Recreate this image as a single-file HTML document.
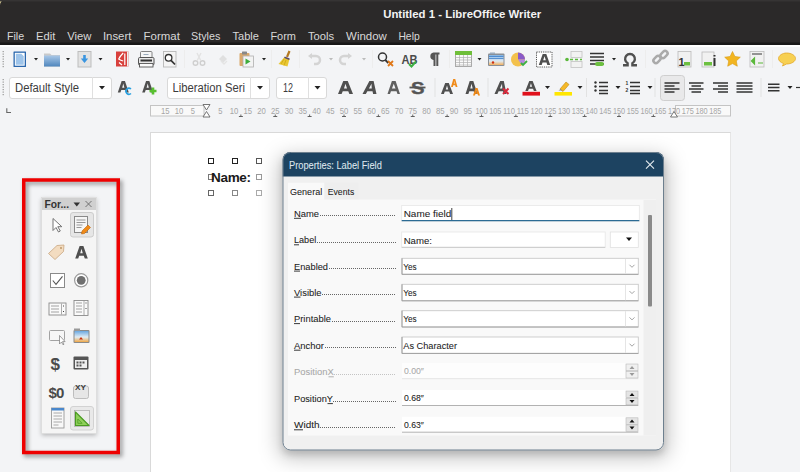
<!DOCTYPE html>
<html><head><meta charset="utf-8">
<style>
*{margin:0;padding:0;box-sizing:border-box}
html,body{width:800px;height:472px;overflow:hidden;background:#f3f4f6;font-family:"Liberation Sans",sans-serif;position:relative}
.a{position:absolute}
#title{left:0;top:0;width:800px;height:28px;background:#2b2929;color:#fff;font-weight:bold;font-size:12.5px}
#menu{left:0;top:28px;width:800px;height:17px;background:#2b2929;color:#dcdcdc;font-size:12px}
#menu span{position:absolute;top:1px}
#tb{left:0;top:45px;width:800px;height:56px;background:#f3f4f6}
#page{left:150px;top:132px;width:581px;height:340px;background:#fff;border-top:1px solid #d9d9d9;border-left:1px solid #d9d9d9;border-right:1px solid #e6e6e6}
.h{position:absolute;width:6px;height:6px;border:1px solid #222;background:#fff}
</style></head><body>
<div class="a" style="left:0;top:0;width:6px;height:6px;background:#e8dca0"></div><svg class="a" style="left:0;top:0" width="800" height="45" viewBox="0 0 800 45"><path d="M0 45 V5 a5 5 0 0 1 5 -5 H800 V45z" fill="#2b2929"/><rect x="0" y="0" width="800" height="1.5" fill="#363434"/><rect x="0" y="42.5" width="800" height="2.5" fill="#191818"/><text x="383.2" y="17.8" font-family="Liberation Sans" font-weight="bold" font-size="11.2" fill="#f4f4f4" textLength="158" lengthAdjust="spacingAndGlyphs">Untitled 1 - LibreOffice Writer</text><text x="6.9" y="39.8" font-family="Liberation Sans" font-size="11" fill="#d8d8d8" textLength="17.2" lengthAdjust="spacingAndGlyphs">File</text><text x="36.1" y="39.8" font-family="Liberation Sans" font-size="11" fill="#d8d8d8" textLength="19.3" lengthAdjust="spacingAndGlyphs">Edit</text><text x="67.3" y="39.8" font-family="Liberation Sans" font-size="11" fill="#d8d8d8" textLength="24.2" lengthAdjust="spacingAndGlyphs">View</text><text x="102.9" y="39.8" font-family="Liberation Sans" font-size="11" fill="#d8d8d8" textLength="28.5" lengthAdjust="spacingAndGlyphs">Insert</text><text x="143.6" y="39.8" font-family="Liberation Sans" font-size="11" fill="#d8d8d8" textLength="36.3" lengthAdjust="spacingAndGlyphs">Format</text><text x="191" y="39.8" font-family="Liberation Sans" font-size="11" fill="#d8d8d8" textLength="29.3" lengthAdjust="spacingAndGlyphs">Styles</text><text x="232.5" y="39.8" font-family="Liberation Sans" font-size="11" fill="#d8d8d8" textLength="26.5" lengthAdjust="spacingAndGlyphs">Table</text><text x="270.4" y="39.8" font-family="Liberation Sans" font-size="11" fill="#d8d8d8" textLength="25.6" lengthAdjust="spacingAndGlyphs">Form</text><text x="308" y="39.8" font-family="Liberation Sans" font-size="11" fill="#d8d8d8" textLength="26.2" lengthAdjust="spacingAndGlyphs">Tools</text><text x="346.1" y="39.8" font-family="Liberation Sans" font-size="11" fill="#d8d8d8" textLength="40.7" lengthAdjust="spacingAndGlyphs">Window</text><text x="398.4" y="39.8" font-family="Liberation Sans" font-size="11" fill="#d8d8d8" textLength="21.3" lengthAdjust="spacingAndGlyphs">Help</text></svg>
<div id="tb" class="a"></div><div class="a" style="left:0;top:45px;width:800px;height:1.5px;background:#fff"></div>
<svg class="a" style="left:0;top:45px" width="800" height="56" viewBox="0 45 800 56">
<defs>
<linearGradient id="gfold" x1="0" y1="0" x2="0" y2="1"><stop offset="0" stop-color="#a9c8e8"/><stop offset="1" stop-color="#4f86bd"/></linearGradient>
<linearGradient id="gimg" x1="0" y1="0" x2="0" y2="1"><stop offset="0" stop-color="#7fb3e6"/><stop offset=".6" stop-color="#dfeaf4"/><stop offset="1" stop-color="#f0b060"/></linearGradient>
</defs>
<!-- grips -->
<g fill="#a8a8a8"><rect x="2.5" y="51" width="1.5" height="1.2"/><rect x="2.5" y="53.5" width="1.5" height="1.2"/><rect x="2.5" y="56" width="1.5" height="1.2"/><rect x="2.5" y="58.5" width="1.5" height="1.2"/><rect x="2.5" y="61" width="1.5" height="1.2"/><rect x="2.5" y="63.5" width="1.5" height="1.2"/><rect x="2.5" y="66" width="1.5" height="1.2"/>
<rect x="2.5" y="79" width="1.5" height="1.2"/><rect x="2.5" y="81.5" width="1.5" height="1.2"/><rect x="2.5" y="84" width="1.5" height="1.2"/><rect x="2.5" y="86.5" width="1.5" height="1.2"/><rect x="2.5" y="89" width="1.5" height="1.2"/><rect x="2.5" y="91.5" width="1.5" height="1.2"/><rect x="2.5" y="94" width="1.5" height="1.2"/></g>
<!-- new doc -->
<rect x="13.5" y="51.5" width="12.5" height="15.5" fill="#2a67ad" rx="0.5"/>
<rect x="14.8" y="52.8" width="9.9" height="12.9" fill="#fff"/>
<path d="M15.8 53.8 h5.5 l2.4 2.4 v8.5 h-7.9 z" fill="#9ec4ea"/>
<!-- dropdowns -->
<g fill="#222">
<path d="M34 58h4l-2 2.5z"/><path d="M66 58h4l-2 2.5z"/><path d="M98.5 58h4l-2 2.5z"/><path d="M262 58h4l-2 2.5z"/>
<path d="M329 58h4l-2 2.5z" fill="#bbb"/><path d="M362 58h4l-2 2.5z" fill="#bbb"/>
<path d="M477.5 58h4l-2 2.5z"/><path d="M612 58h4l-2 2.5z"/>
</g>
<!-- folder -->
<path d="M44 53.5 h6 l1.5 1.5 h8.5 v11.5 h-16 z" fill="#c9c9c9"/>
<rect x="44" y="55.5" width="16" height="11" fill="url(#gfold)"/>
<!-- save -->
<rect x="78" y="51.5" width="13" height="15.5" fill="#e3e3e3" stroke="#bdbdbd" stroke-width="1"/>
<path d="M83.2 55 h2.6 v3.6 h2.4 l-3.7 4.4 l-3.7 -4.4 h2.4z" fill="#3a95e0"/>
<!-- pdf -->
<rect x="116" y="51.5" width="12.5" height="15" fill="#d8403c"/>
<rect x="127" y="51.5" width="1.5" height="15" fill="#eee"/>
<path d="M123.2 53 q-3 3 -4.5 6 q2 1.5 4.5 2 M124.8 53.5 v11.5 M119 62.5 l3 2.5" stroke="#fff" stroke-width="1.2" fill="none"/>
<!-- print -->
<rect x="140.5" y="51.5" width="11.5" height="7" fill="#f6f6f6" stroke="#777" stroke-width="0.9" rx="1"/>
<path d="M143.5 54.5 h5" stroke="#9ab" stroke-width="1"/>
<rect x="138.5" y="57.5" width="15.5" height="7.5" fill="#e8e8e8" stroke="#555" stroke-width="1" rx="1.2"/>
<rect x="140.5" y="59.5" width="11.5" height="2" fill="#333"/>
<rect x="139.5" y="63.5" width="13.5" height="3.5" fill="#fafafa" stroke="#555" stroke-width="0.9"/>
<!-- preview -->
<rect x="163.5" y="51.5" width="12.5" height="15.5" fill="#f4f4f4" stroke="#b8b8b8" stroke-width="0.9"/>
<circle cx="168.6" cy="57.8" r="3.3" fill="#fff" stroke="#333" stroke-width="1.3"/>
<path d="M171 60.3 l4 4.2" stroke="#333" stroke-width="1.8"/>
<!-- seps -->
<g fill="#ededed"><rect x="184" y="50" width="1" height="18"/><rect x="271" y="50" width="1" height="18"/><rect x="299" y="50" width="1" height="18"/><rect x="372" y="50" width="1" height="18"/><rect x="449" y="50" width="1" height="18"/><rect x="560" y="50" width="1" height="18"/><rect x="645" y="50" width="1" height="18"/><rect x="772" y="50" width="1" height="18"/></g>
<!-- cut (disabled) -->
<g stroke="#cfcfcf" stroke-width="1.4" fill="none"><circle cx="195.5" cy="63" r="2.3"/><circle cx="202.5" cy="63" r="2.3"/><path d="M197 61 l4 -8 M201 61 l-4 -8" stroke="#e2e2e2"/></g>
<!-- copy (disabled) -->
<path d="M219 59 l4 -4 l4 4 l-4 4z" fill="#e0e0e0"/><path d="M221 61 l3 3 l3 -3" stroke="#e4e4e4" stroke-width="1.3" fill="none"/>
<!-- paste -->
<rect x="239.5" y="53" width="10" height="13" fill="#d9a86a" rx="1"/>
<rect x="242" y="51.5" width="5" height="3" fill="#888" rx="0.5"/>
<rect x="243" y="56" width="10.5" height="11" fill="#f3f3f3" stroke="#b0b0b0" stroke-width="0.8"/>
<path d="M245.5 58.5 v6 l5 -3z" fill="#3cab3c"/>
<!-- clone brush -->
<path d="M289.5 51 l-2.5 6" stroke="#b57a22" stroke-width="2.2"/>
<path d="M284.5 57 l5 2 l-2 7.5 l-9 -2.5 z" fill="#e9c733"/>
<path d="M284.5 57.3 l5 2" stroke="#5a4a6a" stroke-width="1.5"/>
<path d="M281 64 l3 -5 M284 65.5 l2 -5.5" stroke="#c9a010" stroke-width="0.7"/>
<!-- undo/redo disabled -->
<path d="M310 56 h6 a4 4 0 0 1 0 8 h-2" stroke="#d4d4d4" stroke-width="2.5" fill="none"/><path d="M308 56 l4 -3 v6z" fill="#d4d4d4"/>
<path d="M350 56 h-6 a4 4 0 0 0 0 8 h2" stroke="#d4d4d4" stroke-width="2.5" fill="none"/><path d="M352 56 l-4 -3 v6z" fill="#d4d4d4"/>
<!-- find replace -->
<circle cx="382.5" cy="57" r="4" fill="none" stroke="#333" stroke-width="1.5"/>
<path d="M385.3 60 l3 3" stroke="#333" stroke-width="1.8"/>
<path d="M388 61 l5 5 M393 61 l-5 5" stroke="#e07818" stroke-width="1.8"/>
<!-- spelling -->
<text x="401.5" y="63.5" font-family="Liberation Sans" font-weight="bold" font-size="12.5" fill="#4a4a4a" textLength="16" lengthAdjust="spacingAndGlyphs">AB</text>
<path d="M409 64 l2.5 2.5 l4.5 -5" stroke="#3cb043" stroke-width="2" fill="none"/>
<!-- pilcrow -->
<path d="M433.5 52.5 h6 v2 h-1.2 v11.5 h-2 v-11.5 h-0.8 v11.5 h-2 v-6 a3.8 3.8 0 0 1 0 -7.5z" fill="#555"/>
<!-- table -->
<rect x="455.5" y="51.5" width="16" height="15" fill="#fafafa" stroke="#a0a0a0" stroke-width="0.9"/>
<rect x="455" y="51" width="17" height="4" fill="#6fbf3a"/>
<path d="M455.5 57.5h16 M455.5 60h16 M455.5 62.5h16 M455.5 65h16 M459.5 55v11.5 M463.5 55v11.5 M467.5 55v11.5" stroke="#b0b0b0" stroke-width="0.7"/>
<!-- image -->
<rect x="488" y="53.5" width="16.5" height="12.5" fill="#8a8f96" rx="1"/>
<rect x="489" y="55" width="14.5" height="10" fill="url(#gimg)"/>
<rect x="490" y="52.5" width="5" height="1.5" fill="#9ab"/>
<path d="M489 56.5 h14.5 M489 58.5 h14.5" stroke="#3d7fc8" stroke-width="0.8"/>
<circle cx="493" cy="62.5" r="1.2" fill="#d03010"/>
<!-- chart -->
<circle cx="518" cy="59.5" r="7" fill="#f3c14c"/>
<path d="M518 59.5 v-7 a7 7 0 0 1 7 7z" fill="#8a5ac8"/>
<path d="M518 59.5 h7 a7 7 0 0 1 -3 5.8z" fill="#b48ae0"/>
<path d="M521 63 l2 2 l4 -4" stroke="#3cb043" stroke-width="1.8" fill="none"/>
<!-- text box -->
<rect x="536.5" y="52" width="15.5" height="15" fill="#fff" stroke="#555" stroke-width="1" stroke-dasharray="1.2 1"/>
<path d="M538.8 65 L542.7 54 H546.3 L550.2 65 H547.3 L546.5 62.6 H542.5 L541.7 65 Z M543.2 60.3 H545.8 L544.5 56.2 Z" fill="#505050" fill-rule="evenodd"/>
<!-- page break -->
<rect x="571" y="51.5" width="11" height="6" fill="#f2f2f2" stroke="#c2c2c2" stroke-width="0.8"/>
<rect x="571" y="61.5" width="11" height="6" fill="#f2f2f2" stroke="#c2c2c2" stroke-width="0.8"/>
<circle cx="567" cy="59.5" r="1.8" fill="#5bb83b"/>
<path d="M570 59.5 h3 M575 59.5 h3 M580 59.5 h2" stroke="#5bb83b" stroke-width="1.5"/>
<!-- field -->
<path d="M590 53.5 h14 M590 57 h14 M590 60.5 h14 M590 64 h14" stroke="#333" stroke-width="1.6"/>
<rect x="595" y="62" width="9" height="4" rx="2" fill="#6cc040"/>
<!-- omega -->
<path d="M623 65.2 h4.6 v-2 a4.9 4.9 0 1 1 4.8 0 v2 h4.6" stroke="#505050" stroke-width="2.4" fill="none"/>
<!-- link -->
<g stroke="#aaa" stroke-width="2.5" fill="none"><rect x="653" y="57" width="8" height="5" rx="2.5" transform="rotate(-45 657 59.5)"/><rect x="660" y="52" width="8" height="5" rx="2.5" transform="rotate(-45 664 54.5)"/></g>
<!-- footnote -->
<rect x="678" y="51.5" width="13" height="15.5" fill="#f1f1f1" stroke="#bbb" stroke-width="0.8"/>
<text x="678.5" y="66" font-family="Liberation Sans" font-weight="bold" font-size="11" fill="#333">1</text>
<rect x="684" y="62" width="6" height="3.5" fill="#6cc040"/>
<!-- endnote -->
<rect x="702" y="52" width="12" height="15" fill="#f1f1f1" stroke="#bbb" stroke-width="0.8"/>
<rect x="704" y="62" width="8" height="3.5" fill="#6cc040"/>
<rect x="713.5" y="58" width="2" height="8" fill="#333"/><rect x="713.5" y="55" width="2" height="1.5" fill="#333"/>
<!-- star -->
<path d="M732.5 51.5 l2.4 5 l5.4 .7 l-4 3.7 l1 5.3 l-4.8 -2.6 l-4.8 2.6 l1 -5.3 l-4 -3.7 l5.4 -.7z" fill="#f2b520" stroke="#d89a10" stroke-width="0.6"/>
<!-- cross ref -->
<rect x="750" y="51.5" width="14" height="15.5" fill="#f1f1f1" stroke="#bbb" stroke-width="0.8"/>
<path d="M752 54 h10" stroke="#555" stroke-width="1.2"/>
<path d="M751.5 61 l3 -3 v6z M758 63 h5" fill="#5bb83b" stroke="#5bb83b" stroke-width="1.2"/>
<!-- comment -->
<path d="M786.5 53 c5 0 9 2.5 9 5.5 s-4 5.5 -9 5.5 l-4 2 l1 -2.5 c-3 -1 -5 -3 -5 -5 c0 -3 4 -5.5 8 -5.5z" fill="#f7d052" stroke="#e3a82a" stroke-width="0.8"/>
</svg>

<svg class="a" style="left:0;top:72px" width="800" height="30" viewBox="0 72 800 30">
<!-- style box -->
<rect x="9.5" y="77.5" width="102" height="21" fill="#fff" stroke="#d9d9d9" rx="2.5"/>
<path d="M92.5 77 v21" stroke="#e0e0e0"/>
<text x="15" y="91.5" font-family="Liberation Sans" font-size="12" fill="#3c3c3c" textLength="64" lengthAdjust="spacingAndGlyphs">Default Style</text>
<path d="M99 86h6l-3 3.5z" fill="#222"/>
<!-- update style / new style -->
<path d="M117.80 92.50 L121.65 81.00 H124.95 L128.80 92.50 H126.16 L125.31 89.97 H121.29 L120.44 92.50 Z M122.19 87.67 H124.41 L123.30 83.53 Z" fill="#505050" fill-rule="evenodd"/>
<path d="M131 89 a3 3 0 1 0 0 4.5" stroke="#28a0e0" stroke-width="1.6" fill="none"/>
<path d="M142.20 92.50 L146.05 81.00 H149.35 L153.20 92.50 H150.56 L149.71 89.97 H145.69 L144.84 92.50 Z M146.59 87.67 H148.81 L147.70 83.53 Z" fill="#505050" fill-rule="evenodd"/>
<path d="M149.5 91 h7 M153 87.5 v7" stroke="#58c030" stroke-width="2.6"/>
<!-- font name box -->
<rect x="167.5" y="77.5" width="102" height="21" fill="#fff" stroke="#d9d9d9" rx="2.5"/>
<path d="M250.5 77 v21" stroke="#e0e0e0"/>
<text x="172.5" y="91.5" font-family="Liberation Sans" font-size="12" fill="#3c3c3c" textLength="72.5" lengthAdjust="spacingAndGlyphs">Liberation Seri</text>
<path d="M257 86h6l-3 3.5z" fill="#222"/>
<!-- size box -->
<rect x="276.5" y="77.5" width="50" height="21" fill="#fff" stroke="#d9d9d9" rx="2.5"/>
<path d="M308.5 77 v21" stroke="#e0e0e0"/>
<text x="283" y="91.5" font-family="Liberation Sans" font-size="12" fill="#3c3c3c" textLength="10" lengthAdjust="spacingAndGlyphs">12</text>
<path d="M314.5 86h6l-3 3.5z" fill="#222"/>
<!-- B I U S -->
<path d="M338.00 94.00 L343.25 81.00 H347.75 L353.00 94.00 H349.40 L348.25 91.14 H342.75 L341.60 94.00 Z M343.98 88.54 H347.02 L345.50 83.86 Z" fill="#505050" fill-rule="evenodd"/>
<path d="M362.50 94.00 L369.40 81.00 H373.60 L376.50 94.00 H373.14 L372.50 91.14 H367.38 L365.86 94.00 Z M368.93 88.54 H371.75 L371.50 83.86 Z" fill="#505050" fill-rule="evenodd"/>
<path d="M387.50 94.00 L391.88 81.00 H395.62 L400.00 94.00 H397.50 L396.54 91.14 H390.96 L390.00 94.00 Z M391.96 88.54 H395.54 L393.75 83.86 Z" fill="#606060" fill-rule="evenodd"/>
<text x="411" y="94" font-family="Liberation Sans" font-weight="bold" font-size="17" fill="#555" stroke="#555" stroke-width="0.4" textLength="13.5" lengthAdjust="spacingAndGlyphs">S</text>
<path d="M409.5 87.5 h16" stroke="#555" stroke-width="1.8"/>
<g fill="#e2e2e2"><rect x="434.5" y="78" width="1" height="19"/><rect x="487.5" y="78" width="1" height="19"/><rect x="586" y="78" width="1" height="19"/><rect x="654.5" y="78" width="1" height="19"/><rect x="760.5" y="78" width="1" height="19"/></g>
<!-- super/sub -->
<path d="M441.00 94.00 L445.20 83.00 H448.80 L453.00 94.00 H450.12 L449.20 91.58 H444.80 L443.88 94.00 Z M445.79 89.38 H448.21 L447.00 85.42 Z" fill="#505050" fill-rule="evenodd"/>
<path d="M451.00 87.00 L453.27 79.00 H455.23 L457.50 87.00 H455.68 L455.18 85.24 H453.32 L452.82 87.00 Z M453.87 83.64 H454.63 L454.25 80.76 Z" fill="#f08a18" fill-rule="evenodd"/>
<path d="M465.50 94.00 L469.70 81.00 H473.30 L477.50 94.00 H474.62 L473.70 91.14 H469.30 L468.38 94.00 Z M470.29 88.54 H472.71 L471.50 83.86 Z" fill="#505050" fill-rule="evenodd"/>
<path d="M473.00 95.50 L475.45 88.00 H477.55 L480.00 95.50 H478.04 L477.50 93.85 H475.50 L474.96 95.50 Z M476.09 92.35 H476.91 L476.50 89.65 Z" fill="#f08a18" fill-rule="evenodd"/>
<!-- clear -->
<path d="M494.50 94.00 L500.20 81.00 H503.80 L506.50 94.00 H503.62 L503.03 91.14 H498.63 L497.38 94.00 Z M499.92 88.54 H502.34 L502.00 83.86 Z" fill="#505050" fill-rule="evenodd"/>
<path d="M503 88.5 l5.5 5.5 M508.5 88.5 l-5.5 5.5" stroke="#d8283a" stroke-width="2"/>
<!-- font color -->
<path d="M525.30 91.00 L529.25 81.00 H532.64 L536.60 91.00 H533.89 L533.02 88.80 H528.88 L528.01 91.00 Z M529.81 86.80 H532.09 L530.95 83.20 Z" fill="#505050" fill-rule="evenodd"/>
<rect x="522.5" y="91.8" width="17.5" height="3.8" fill="#e0101c"/>
<path d="M545 86h5l-2.5 3z" fill="#222"/>
<!-- highlight -->
<path d="M560 89 l6 -7 l3 2.5 l-6 7z" fill="#f5b828" stroke="#c08a10" stroke-width="0.6"/>
<path d="M558.5 90.5 l2 -1.5 l2 1.5 z" fill="#888"/>
<rect x="554.5" y="92" width="17.5" height="3.6" fill="#ffe600"/>
<path d="M577.5 86h5l-2.5 3z" fill="#222"/>
<!-- bullets -->
<g fill="#333"><circle cx="595.5" cy="82.5" r="1.2"/><circle cx="595.5" cy="86.5" r="1.2"/><circle cx="595.5" cy="90.5" r="1.2"/></g>
<path d="M599 82.5 h9 M599 86.5 h9 M599 90.5 h9 M599 93.5 h9" stroke="#333" stroke-width="1.3"/>
<path d="M615.5 86h5l-2.5 3z" fill="#222"/>
<!-- numbering -->
<text x="625.5" y="85" font-family="Liberation Sans" font-weight="bold" font-size="5" fill="#333">1</text>
<text x="625.5" y="92" font-family="Liberation Sans" font-weight="bold" font-size="5" fill="#333">2</text>
<path d="M630 82.5 h10 M630 86.5 h10 M630 90.5 h10 M630 93.5 h10" stroke="#333" stroke-width="1.3"/>
<path d="M647.5 86h5l-2.5 3z" fill="#222"/>
<!-- align left selected -->
<rect x="660.5" y="75.5" width="24" height="25" rx="3" fill="#e9e9ea" stroke="#cfcfcf"/>
<path d="M664.5 83h15 M664.5 86h10 M664.5 89h15 M664.5 92h10" stroke="#333" stroke-width="1.4"/>
<path d="M689 83h14.5 M691.5 86h9.5 M689 89h14.5 M691.5 92h9.5" stroke="#333" stroke-width="1.4"/>
<path d="M713 83h15 M718 86h10 M713 89h15 M718 92h10" stroke="#333" stroke-width="1.4"/>
<path d="M736.5 83h16 M736.5 86h16 M736.5 89h16 M736.5 92h16" stroke="#333" stroke-width="1.4"/>
<path d="M768 84.2h11.5 M768 87.5h11.5 M768 90.8h11.5" stroke="#333" stroke-width="1.4"/>
<path d="M787.5 86h5l-2.5 3z" fill="#222"/>
<path d="M796 87.5h4" stroke="#333" stroke-width="1.2"/>
</svg>

<svg class="a" style="left:0;top:100px" width="800" height="20" viewBox="0 100 800 20">
<path d="M6.8 108.3 v4.2 h4.2" stroke="#666" stroke-width="1.1" fill="none"/>
<rect x="150.5" y="105.5" width="53.5" height="10.5" fill="#f9f9f9" stroke="#c4c4c4"/>
<rect x="675.5" y="105.5" width="55" height="10.5" fill="#f9f9f9" stroke="#c4c4c4"/>
<text x="160.95" y="113.6" font-family="Liberation Sans" font-size="8.2" fill="#a6a6a6" textLength="8.6" lengthAdjust="spacingAndGlyphs">15</text>
<text x="174.70" y="113.6" font-family="Liberation Sans" font-size="8.2" fill="#a6a6a6" textLength="8.6" lengthAdjust="spacingAndGlyphs">10</text>
<text x="190.65" y="113.6" font-family="Liberation Sans" font-size="8.2" fill="#a6a6a6" textLength="4.2" lengthAdjust="spacingAndGlyphs">5</text>
<text x="218.15" y="113.6" font-family="Liberation Sans" font-size="8.2" fill="#a6a6a6" textLength="4.2" lengthAdjust="spacingAndGlyphs">5</text>
<text x="229.70" y="113.6" font-family="Liberation Sans" font-size="8.2" fill="#a6a6a6" textLength="8.6" lengthAdjust="spacingAndGlyphs">10</text>
<text x="243.45" y="113.6" font-family="Liberation Sans" font-size="8.2" fill="#a6a6a6" textLength="8.6" lengthAdjust="spacingAndGlyphs">15</text>
<text x="257.20" y="113.6" font-family="Liberation Sans" font-size="8.2" fill="#a6a6a6" textLength="8.6" lengthAdjust="spacingAndGlyphs">20</text>
<text x="270.95" y="113.6" font-family="Liberation Sans" font-size="8.2" fill="#a6a6a6" textLength="8.6" lengthAdjust="spacingAndGlyphs">25</text>
<text x="284.70" y="113.6" font-family="Liberation Sans" font-size="8.2" fill="#a6a6a6" textLength="8.6" lengthAdjust="spacingAndGlyphs">30</text>
<text x="298.45" y="113.6" font-family="Liberation Sans" font-size="8.2" fill="#a6a6a6" textLength="8.6" lengthAdjust="spacingAndGlyphs">35</text>
<text x="312.20" y="113.6" font-family="Liberation Sans" font-size="8.2" fill="#a6a6a6" textLength="8.6" lengthAdjust="spacingAndGlyphs">40</text>
<text x="325.95" y="113.6" font-family="Liberation Sans" font-size="8.2" fill="#a6a6a6" textLength="8.6" lengthAdjust="spacingAndGlyphs">45</text>
<text x="339.70" y="113.6" font-family="Liberation Sans" font-size="8.2" fill="#a6a6a6" textLength="8.6" lengthAdjust="spacingAndGlyphs">50</text>
<text x="353.45" y="113.6" font-family="Liberation Sans" font-size="8.2" fill="#a6a6a6" textLength="8.6" lengthAdjust="spacingAndGlyphs">55</text>
<text x="367.20" y="113.6" font-family="Liberation Sans" font-size="8.2" fill="#a6a6a6" textLength="8.6" lengthAdjust="spacingAndGlyphs">60</text>
<text x="380.95" y="113.6" font-family="Liberation Sans" font-size="8.2" fill="#a6a6a6" textLength="8.6" lengthAdjust="spacingAndGlyphs">65</text>
<text x="394.70" y="113.6" font-family="Liberation Sans" font-size="8.2" fill="#a6a6a6" textLength="8.6" lengthAdjust="spacingAndGlyphs">70</text>
<text x="408.45" y="113.6" font-family="Liberation Sans" font-size="8.2" fill="#a6a6a6" textLength="8.6" lengthAdjust="spacingAndGlyphs">75</text>
<text x="422.20" y="113.6" font-family="Liberation Sans" font-size="8.2" fill="#a6a6a6" textLength="8.6" lengthAdjust="spacingAndGlyphs">80</text>
<text x="435.95" y="113.6" font-family="Liberation Sans" font-size="8.2" fill="#a6a6a6" textLength="8.6" lengthAdjust="spacingAndGlyphs">85</text>
<text x="449.70" y="113.6" font-family="Liberation Sans" font-size="8.2" fill="#a6a6a6" textLength="8.6" lengthAdjust="spacingAndGlyphs">90</text>
<text x="463.45" y="113.6" font-family="Liberation Sans" font-size="8.2" fill="#a6a6a6" textLength="8.6" lengthAdjust="spacingAndGlyphs">95</text>
<text x="475.40" y="113.6" font-family="Liberation Sans" font-size="8.2" fill="#a6a6a6" textLength="12.2" lengthAdjust="spacingAndGlyphs">100</text>
<text x="489.15" y="113.6" font-family="Liberation Sans" font-size="8.2" fill="#a6a6a6" textLength="12.2" lengthAdjust="spacingAndGlyphs">105</text>
<text x="502.90" y="113.6" font-family="Liberation Sans" font-size="8.2" fill="#a6a6a6" textLength="12.2" lengthAdjust="spacingAndGlyphs">110</text>
<text x="516.65" y="113.6" font-family="Liberation Sans" font-size="8.2" fill="#a6a6a6" textLength="12.2" lengthAdjust="spacingAndGlyphs">115</text>
<text x="530.40" y="113.6" font-family="Liberation Sans" font-size="8.2" fill="#a6a6a6" textLength="12.2" lengthAdjust="spacingAndGlyphs">120</text>
<text x="544.15" y="113.6" font-family="Liberation Sans" font-size="8.2" fill="#a6a6a6" textLength="12.2" lengthAdjust="spacingAndGlyphs">125</text>
<text x="557.90" y="113.6" font-family="Liberation Sans" font-size="8.2" fill="#a6a6a6" textLength="12.2" lengthAdjust="spacingAndGlyphs">130</text>
<text x="571.65" y="113.6" font-family="Liberation Sans" font-size="8.2" fill="#a6a6a6" textLength="12.2" lengthAdjust="spacingAndGlyphs">135</text>
<text x="585.40" y="113.6" font-family="Liberation Sans" font-size="8.2" fill="#a6a6a6" textLength="12.2" lengthAdjust="spacingAndGlyphs">140</text>
<text x="599.15" y="113.6" font-family="Liberation Sans" font-size="8.2" fill="#a6a6a6" textLength="12.2" lengthAdjust="spacingAndGlyphs">145</text>
<text x="612.90" y="113.6" font-family="Liberation Sans" font-size="8.2" fill="#a6a6a6" textLength="12.2" lengthAdjust="spacingAndGlyphs">150</text>
<text x="626.65" y="113.6" font-family="Liberation Sans" font-size="8.2" fill="#a6a6a6" textLength="12.2" lengthAdjust="spacingAndGlyphs">155</text>
<text x="640.40" y="113.6" font-family="Liberation Sans" font-size="8.2" fill="#a6a6a6" textLength="12.2" lengthAdjust="spacingAndGlyphs">160</text>
<text x="654.15" y="113.6" font-family="Liberation Sans" font-size="8.2" fill="#a6a6a6" textLength="12.2" lengthAdjust="spacingAndGlyphs">165</text>
<text x="667.90" y="113.6" font-family="Liberation Sans" font-size="8.2" fill="#a6a6a6" textLength="12.2" lengthAdjust="spacingAndGlyphs">170</text>
<text x="681.65" y="113.6" font-family="Liberation Sans" font-size="8.2" fill="#a6a6a6" textLength="12.2" lengthAdjust="spacingAndGlyphs">175</text>
<text x="695.40" y="113.6" font-family="Liberation Sans" font-size="8.2" fill="#a6a6a6" textLength="12.2" lengthAdjust="spacingAndGlyphs">180</text>
<text x="709.15" y="113.6" font-family="Liberation Sans" font-size="8.2" fill="#a6a6a6" textLength="12.2" lengthAdjust="spacingAndGlyphs">185</text>
<path d="M203 104.5 h7 l-3.5 5.5 z M203 117 h7 l-3.5 -5.5 z" fill="#fff" stroke="#666" stroke-width="0.9"/>
<path d="M670.5 117 h7 l-3.5 -5.5 z" fill="#fff" stroke="#666" stroke-width="0.9"/>
<path d="M238.88 116.5 h4 M240.88 116.5 v-2" stroke="#555" stroke-width="0.9"/>
<path d="M273.25 116.5 h4 M275.25 116.5 v-2" stroke="#555" stroke-width="0.9"/>
<path d="M307.62 116.5 h4 M309.62 116.5 v-2" stroke="#555" stroke-width="0.9"/>
<path d="M342.00 116.5 h4 M344.00 116.5 v-2" stroke="#555" stroke-width="0.9"/>
<path d="M376.38 116.5 h4 M378.38 116.5 v-2" stroke="#555" stroke-width="0.9"/>
<path d="M410.75 116.5 h4 M412.75 116.5 v-2" stroke="#555" stroke-width="0.9"/>
<path d="M445.12 116.5 h4 M447.12 116.5 v-2" stroke="#555" stroke-width="0.9"/>
<path d="M479.50 116.5 h4 M481.50 116.5 v-2" stroke="#555" stroke-width="0.9"/>
<path d="M513.88 116.5 h4 M515.88 116.5 v-2" stroke="#555" stroke-width="0.9"/>
<path d="M548.25 116.5 h4 M550.25 116.5 v-2" stroke="#555" stroke-width="0.9"/>
<path d="M582.62 116.5 h4 M584.62 116.5 v-2" stroke="#555" stroke-width="0.9"/>
<path d="M617.00 116.5 h4 M619.00 116.5 v-2" stroke="#555" stroke-width="0.9"/>
<path d="M651.38 116.5 h4 M653.38 116.5 v-2" stroke="#555" stroke-width="0.9"/>
</svg>
<div id="page" class="a"></div>
<div class="h" style="left:208px;top:158px"></div><div class="h" style="left:232px;top:158px"></div><div class="h" style="left:256px;top:158px;border-color:#555"></div>
<div class="h" style="left:208px;top:173.5px;border-color:#777"></div><div class="h" style="left:256px;top:173.5px;border-color:#999"></div>
<div class="h" style="left:208px;top:189.5px;border-color:#666"></div><div class="h" style="left:232px;top:189.5px;border-color:#888"></div><div class="h" style="left:256px;top:189.5px;border-color:#aaa"></div>
<div class="a" style="left:211px;top:170px;font-weight:bold;font-size:13.5px;color:#1a1a1a;letter-spacing:-0.3px">Name:</div>
<svg class="a" style="left:0;top:170px" width="130" height="300" viewBox="0 170 130 300">
<defs>
<filter id="sh" x="-20%" y="-20%" width="140%" height="140%"><feGaussianBlur stdDeviation="2"/></filter>
<linearGradient id="gimg2" x1="0" y1="0" x2="0" y2="1"><stop offset="0" stop-color="#6aa8e0"/><stop offset=".55" stop-color="#e0ecf5"/><stop offset="1" stop-color="#f0a848"/></linearGradient>
</defs>
<!-- red frame shadow -->
<rect x="26" y="182.5" width="94.5" height="272.5" fill="none" stroke="#000" stroke-opacity=".38" stroke-width="4" filter="url(#sh)"/>
<rect x="23.75" y="180" width="94.5" height="272.5" fill="none" stroke="#ee0000" stroke-width="3.5"/>
<!-- toolbar body -->
<rect x="41.5" y="199" width="55" height="236.5" fill="#000" fill-opacity=".25" filter="url(#sh)"/><rect x="41.5" y="197.5" width="55" height="236" fill="#f5f5f5" stroke="#dcdcdc" stroke-width="0.8"/>
<rect x="42" y="198" width="54" height="12" fill="#d0d0d0"/>
<text x="44.4" y="208" font-family="Liberation Sans" font-weight="bold" font-size="10.2" fill="#333" textLength="24.6" lengthAdjust="spacingAndGlyphs">For...</text>
<path d="M73.5 202.5 h6.5 l-3.25 4z" fill="#333"/>
<path d="M85.5 201 l6 6 M91.5 201 l-6 6" stroke="#666" stroke-width="0.9"/>
<!-- selected buttons -->
<rect x="70.5" y="212.5" width="23" height="24.5" rx="2.5" fill="#e6e6e6" stroke="#cdcdcd"/>
<rect x="70.5" y="406.5" width="23" height="23.5" rx="2.5" fill="#e9e9e9" stroke="#d2d2d2"/>
<!-- pointer -->
<path d="M53 218.5 v12 l3 -3 l2.5 4.5 l1.8 -1 l-2.5 -4.3 h4z" fill="#fff" stroke="#666" stroke-width="0.9" stroke-linejoin="round"/>
<!-- design mode doc -->
<rect x="74.5" y="216.5" width="13" height="16" fill="#f6f6f6" stroke="#8a8a8a"/>
<path d="M76.5 220h9 M76.5 222.5h9 M76.5 225h6 M76.5 227.5h5" stroke="#999" stroke-width="1"/>
<path d="M82 231 l6 -6 l2.5 2.5 l-6 6 l-3 .5z" fill="#f08a18" stroke="#b05a00" stroke-width="0.5"/>
<!-- label tag -->
<path d="M48.5 253.5 l8.5 -8 l7 -0.5 l-0.5 6.5 l-8.5 8z" fill="#f3dcc0" stroke="#c8a680" stroke-width="0.8" stroke-linejoin="round"/>
<circle cx="61" cy="248" r="0.9" fill="#b89060"/>
<!-- A -->
<path d="M75.20 258.50 L79.61 246.00 H83.39 L87.80 258.50 H84.78 L83.81 255.75 H79.19 L78.22 258.50 Z M80.23 253.25 H82.77 L81.50 248.75 Z" fill="#4f4f4f" fill-rule="evenodd"/>
<!-- checkbox -->
<rect x="50.5" y="273.5" width="14" height="14" fill="#fff" stroke="#8a8a8a" stroke-width="1"/>
<path d="M52.8 280.5 l3.2 3.8 l6.5 -8" stroke="#555" stroke-width="1.1" fill="none"/>
<!-- radio -->
<circle cx="81.2" cy="280.3" r="6.6" fill="#fff" stroke="#9a9a9a" stroke-width="1.2"/>
<circle cx="81.2" cy="280.3" r="4.4" fill="#6f6f6f"/>
<!-- listbox -->
<rect x="49" y="303" width="17" height="12" fill="#fafafa" stroke="#8a8a8a" stroke-width="0.9"/>
<path d="M51 306h8 M51 309h8 M51 312h8" stroke="#999" stroke-width="0.9"/>
<path d="M61.5 303.5 v11" stroke="#999" stroke-width="0.8"/>
<rect x="63" y="305.5" width="1" height="1" fill="#444"/><rect x="63" y="311" width="1" height="1" fill="#444"/>
<!-- combobox -->
<rect x="74" y="300.5" width="14" height="15" fill="#fafafa" stroke="#8a8a8a" stroke-width="0.9"/>
<path d="M76 303h6 M76 306h6 M76 309h6 M76 312h6" stroke="#999" stroke-width="0.9"/>
<path d="M84 301 v14" stroke="#999" stroke-width="0.8"/>
<rect x="85.5" y="302.5" width="1" height="1" fill="#444"/><rect x="85.5" y="308" width="1" height="1" fill="#444"/>
<!-- pushbutton -->
<rect x="49.5" y="330.5" width="15" height="10" fill="#f6f6f6" stroke="#999" stroke-width="0.9" rx="1"/>
<path d="M59.5 335.5 v8.5 l2 -2 l1.5 2.8 l1 -0.6 l-1.5 -2.6 h2.6z" fill="#fff" stroke="#777" stroke-width="0.7"/>
<!-- image button -->
<rect x="73.5" y="330" width="16" height="13" fill="#8a8a8a" rx="1"/>
<rect x="74.5" y="331" width="14" height="11" fill="url(#gimg2)"/>
<rect x="74" y="328.5" width="6" height="2.5" fill="#999"/>
<path d="M81 337 l2 2.5 h-4z" fill="#c83010"/>
<!-- $ -->
<text x="50.5" y="370" font-family="Liberation Sans" font-weight="bold" font-size="17" fill="#4a4a4a">$</text>
<!-- date -->
<rect x="73.5" y="356.5" width="15" height="13" fill="#555" rx="1"/>
<rect x="75" y="360" width="12" height="8" fill="#eee"/>
<g fill="#555"><rect x="76.5" y="361.5" width="2" height="2"/><rect x="79.5" y="361.5" width="2" height="2"/><rect x="82.5" y="361.5" width="2" height="2"/><rect x="76.5" y="364.5" width="2" height="2"/><rect x="79.5" y="364.5" width="2" height="2"/></g>
<!-- $0 -->
<text x="48.5" y="397.5" font-family="Liberation Sans" font-weight="bold" font-size="15" fill="#4a4a4a" letter-spacing="-0.8">$0</text>
<!-- XY -->
<rect x="73.5" y="386" width="15" height="12.5" rx="2" fill="#e6e6e6" stroke="#b8b8b8" stroke-width="0.9"/>
<text x="75" y="389.5" font-family="Liberation Sans" font-weight="bold" font-size="7.5" fill="#3a3a3a" textLength="11" lengthAdjust="spacingAndGlyphs">XY</text>
<!-- nav doc -->
<rect x="51.5" y="408" width="12.5" height="20" fill="#f8f8f8" stroke="#9a9a9a" stroke-width="0.9"/>
<rect x="51.5" y="408" width="12.5" height="2.5" fill="#4a88cc"/>
<path d="M53.5 413h8.5 M53.5 416h8.5 M53.5 419h8.5 M53.5 422h8.5 M53.5 425h5" stroke="#a0a0a0" stroke-width="0.9"/>
<!-- green triangle -->
<rect x="74.5" y="410.5" width="15" height="16" fill="#ececec" stroke="#aaa" stroke-width="0.7"/>
<path d="M75.5 412 v13.5 h13.5z" fill="#8fd05a" stroke="#4a9a22" stroke-width="1.1" stroke-linejoin="round"/>
<path d="M77.8 419 v4.3 h4.3z" fill="none" stroke="#4a9a22" stroke-width="0.8"/>
</svg>

<svg class="a" style="left:0;top:0" width="800" height="472" viewBox="0 0 800 472">
<defs><filter id="dsh" x="-20%" y="-20%" width="140%" height="140%"><feGaussianBlur stdDeviation="10"/></filter><filter id="dsh2" x="-20%" y="-20%" width="140%" height="140%"><feGaussianBlur stdDeviation="3"/></filter><clipPath id="dclip"><rect x="282.5" y="152" width="381.5" height="298.5" rx="8"/></clipPath></defs>
<rect x="279" y="156" width="389" height="302" rx="10" fill="#000" fill-opacity=".24" filter="url(#dsh)"/>
<rect x="282" y="156" width="383" height="299" rx="8" fill="#000" fill-opacity=".12" filter="url(#dsh2)"/>
<g clip-path="url(#dclip)">
<rect x="282.5" y="152" width="381.5" height="298.5" fill="#f0f0f0"/>
<rect x="282.5" y="152" width="381.5" height="24.5" fill="#1d4361"/>
</g>
<rect x="283" y="152.5" width="380.5" height="297.5" rx="7.5" fill="none" stroke="#6d7f8e" stroke-width="1"/>
<text x="289" y="168.5" font-family="Liberation Sans" stroke-width="0.06" font-size="10.6" fill="#dfe7ee" stroke="#dfe7ee" textLength="92.8" lengthAdjust="spacingAndGlyphs">Properties: Label Field</text>
<path d="M646 160.7 l8 8 M654 160.7 l-8 8" stroke="#e6ecf1" stroke-width="1.1"/>
<rect x="288" y="182.7" width="36.4" height="17" fill="#f9f9f9"/>
<rect x="324.4" y="182.7" width="34.3" height="17" fill="#eeeeee"/>
<text x="290" y="194.5" font-family="Liberation Sans" stroke-width="0.06" font-size="9.5" fill="#222" stroke="#222" textLength="32.2" lengthAdjust="spacingAndGlyphs">General</text>
<text x="327.8" y="194.5" font-family="Liberation Sans" stroke-width="0.06" font-size="9.5" fill="#222" stroke="#222" textLength="26.4" lengthAdjust="spacingAndGlyphs">Events</text>
<rect x="288" y="199.6" width="368" height="236" fill="#f9f9f9"/>
<rect x="643.5" y="200" width="12.5" height="235.5" fill="#efefef"/>
<rect x="648" y="215" width="4" height="91.6" fill="#8a8a8a" rx="1"/>
<text x="294" y="216.8" font-family="Liberation Sans" stroke-width="0.06" font-size="9.4" fill="#222" stroke="#222" textLength="25.1" lengthAdjust="spacingAndGlyphs">Name</text>
<path d="M320 215h1v1h-1zM322 215h1v1h-1zM324 215h1v1h-1zM326 215h1v1h-1zM328 215h1v1h-1zM330 215h1v1h-1zM332 215h1v1h-1zM334 215h1v1h-1zM336 215h1v1h-1zM338 215h1v1h-1zM340 215h1v1h-1zM342 215h1v1h-1zM344 215h1v1h-1zM346 215h1v1h-1zM348 215h1v1h-1zM350 215h1v1h-1zM352 215h1v1h-1zM354 215h1v1h-1zM356 215h1v1h-1zM358 215h1v1h-1zM360 215h1v1h-1zM362 215h1v1h-1zM364 215h1v1h-1zM366 215h1v1h-1zM368 215h1v1h-1zM370 215h1v1h-1zM372 215h1v1h-1zM374 215h1v1h-1zM376 215h1v1h-1zM378 215h1v1h-1zM380 215h1v1h-1zM382 215h1v1h-1zM384 215h1v1h-1zM386 215h1v1h-1zM388 215h1v1h-1zM390 215h1v1h-1zM392 215h1v1h-1zM394 215h1v1h-1z" fill="#666"/>
<path d="M294 218.3 H301" stroke="#222" stroke-width="0.9"/>
<text x="294" y="243.3" font-family="Liberation Sans" stroke-width="0.06" font-size="9.4" fill="#222" stroke="#222" textLength="22.2" lengthAdjust="spacingAndGlyphs">Label</text>
<path d="M317 242h1v1h-1zM319 242h1v1h-1zM321 242h1v1h-1zM323 242h1v1h-1zM325 242h1v1h-1zM327 242h1v1h-1zM329 242h1v1h-1zM331 242h1v1h-1zM333 242h1v1h-1zM335 242h1v1h-1zM337 242h1v1h-1zM339 242h1v1h-1zM341 242h1v1h-1zM343 242h1v1h-1zM345 242h1v1h-1zM347 242h1v1h-1zM349 242h1v1h-1zM351 242h1v1h-1zM353 242h1v1h-1zM355 242h1v1h-1zM357 242h1v1h-1zM359 242h1v1h-1zM361 242h1v1h-1zM363 242h1v1h-1zM365 242h1v1h-1zM367 242h1v1h-1zM369 242h1v1h-1zM371 242h1v1h-1zM373 242h1v1h-1zM375 242h1v1h-1zM377 242h1v1h-1zM379 242h1v1h-1zM381 242h1v1h-1zM383 242h1v1h-1zM385 242h1v1h-1zM387 242h1v1h-1zM389 242h1v1h-1zM391 242h1v1h-1zM393 242h1v1h-1zM395 242h1v1h-1z" fill="#666"/>
<path d="M294 244.8 H299" stroke="#222" stroke-width="0.9"/>
<text x="294" y="269.6" font-family="Liberation Sans" stroke-width="0.06" font-size="9.4" fill="#222" stroke="#222" textLength="34.0" lengthAdjust="spacingAndGlyphs">Enabled</text>
<path d="M329 268h1v1h-1zM331 268h1v1h-1zM333 268h1v1h-1zM335 268h1v1h-1zM337 268h1v1h-1zM339 268h1v1h-1zM341 268h1v1h-1zM343 268h1v1h-1zM345 268h1v1h-1zM347 268h1v1h-1zM349 268h1v1h-1zM351 268h1v1h-1zM353 268h1v1h-1zM355 268h1v1h-1zM357 268h1v1h-1zM359 268h1v1h-1zM361 268h1v1h-1zM363 268h1v1h-1zM365 268h1v1h-1zM367 268h1v1h-1zM369 268h1v1h-1zM371 268h1v1h-1zM373 268h1v1h-1zM375 268h1v1h-1zM377 268h1v1h-1zM379 268h1v1h-1zM381 268h1v1h-1zM383 268h1v1h-1zM385 268h1v1h-1zM387 268h1v1h-1zM389 268h1v1h-1zM391 268h1v1h-1zM393 268h1v1h-1zM395 268h1v1h-1z" fill="#666"/>
<path d="M294 271.1 H300" stroke="#222" stroke-width="0.9"/>
<text x="294" y="295.6" font-family="Liberation Sans" stroke-width="0.06" font-size="9.4" fill="#222" stroke="#222" textLength="27.5" lengthAdjust="spacingAndGlyphs">Visible</text>
<path d="M322 294h1v1h-1zM324 294h1v1h-1zM326 294h1v1h-1zM328 294h1v1h-1zM330 294h1v1h-1zM332 294h1v1h-1zM334 294h1v1h-1zM336 294h1v1h-1zM338 294h1v1h-1zM340 294h1v1h-1zM342 294h1v1h-1zM344 294h1v1h-1zM346 294h1v1h-1zM348 294h1v1h-1zM350 294h1v1h-1zM352 294h1v1h-1zM354 294h1v1h-1zM356 294h1v1h-1zM358 294h1v1h-1zM360 294h1v1h-1zM362 294h1v1h-1zM364 294h1v1h-1zM366 294h1v1h-1zM368 294h1v1h-1zM370 294h1v1h-1zM372 294h1v1h-1zM374 294h1v1h-1zM376 294h1v1h-1zM378 294h1v1h-1zM380 294h1v1h-1zM382 294h1v1h-1zM384 294h1v1h-1zM386 294h1v1h-1zM388 294h1v1h-1zM390 294h1v1h-1zM392 294h1v1h-1zM394 294h1v1h-1z" fill="#666"/>
<path d="M294 297.1 H300.5" stroke="#222" stroke-width="0.9"/>
<text x="294" y="322.1" font-family="Liberation Sans" stroke-width="0.06" font-size="9.4" fill="#222" stroke="#222" textLength="37.0" lengthAdjust="spacingAndGlyphs">Printable</text>
<path d="M332 321h1v1h-1zM334 321h1v1h-1zM336 321h1v1h-1zM338 321h1v1h-1zM340 321h1v1h-1zM342 321h1v1h-1zM344 321h1v1h-1zM346 321h1v1h-1zM348 321h1v1h-1zM350 321h1v1h-1zM352 321h1v1h-1zM354 321h1v1h-1zM356 321h1v1h-1zM358 321h1v1h-1zM360 321h1v1h-1zM362 321h1v1h-1zM364 321h1v1h-1zM366 321h1v1h-1zM368 321h1v1h-1zM370 321h1v1h-1zM372 321h1v1h-1zM374 321h1v1h-1zM376 321h1v1h-1zM378 321h1v1h-1zM380 321h1v1h-1zM382 321h1v1h-1zM384 321h1v1h-1zM386 321h1v1h-1zM388 321h1v1h-1zM390 321h1v1h-1zM392 321h1v1h-1zM394 321h1v1h-1z" fill="#666"/>
<path d="M294 323.6 H300" stroke="#222" stroke-width="0.9"/>
<text x="294" y="348.7" font-family="Liberation Sans" stroke-width="0.06" font-size="9.4" fill="#222" stroke="#222" textLength="30.0" lengthAdjust="spacingAndGlyphs">Anchor</text>
<path d="M325 347h1v1h-1zM327 347h1v1h-1zM329 347h1v1h-1zM331 347h1v1h-1zM333 347h1v1h-1zM335 347h1v1h-1zM337 347h1v1h-1zM339 347h1v1h-1zM341 347h1v1h-1zM343 347h1v1h-1zM345 347h1v1h-1zM347 347h1v1h-1zM349 347h1v1h-1zM351 347h1v1h-1zM353 347h1v1h-1zM355 347h1v1h-1zM357 347h1v1h-1zM359 347h1v1h-1zM361 347h1v1h-1zM363 347h1v1h-1zM365 347h1v1h-1zM367 347h1v1h-1zM369 347h1v1h-1zM371 347h1v1h-1zM373 347h1v1h-1zM375 347h1v1h-1zM377 347h1v1h-1zM379 347h1v1h-1zM381 347h1v1h-1zM383 347h1v1h-1zM385 347h1v1h-1zM387 347h1v1h-1zM389 347h1v1h-1zM391 347h1v1h-1zM393 347h1v1h-1zM395 347h1v1h-1z" fill="#666"/>
<path d="M294 350.2 H300.5" stroke="#222" stroke-width="0.9"/>
<text x="294" y="375.3" font-family="Liberation Sans" stroke-width="0.06" font-size="9.4" fill="#a8a8a8" stroke="#a8a8a8" textLength="39.8" lengthAdjust="spacingAndGlyphs">PositionX</text>
<path d="M334 374h1v1h-1zM336 374h1v1h-1zM338 374h1v1h-1zM340 374h1v1h-1zM342 374h1v1h-1zM344 374h1v1h-1zM346 374h1v1h-1zM348 374h1v1h-1zM350 374h1v1h-1zM352 374h1v1h-1zM354 374h1v1h-1zM356 374h1v1h-1zM358 374h1v1h-1zM360 374h1v1h-1zM362 374h1v1h-1zM364 374h1v1h-1zM366 374h1v1h-1zM368 374h1v1h-1zM370 374h1v1h-1zM372 374h1v1h-1zM374 374h1v1h-1zM376 374h1v1h-1zM378 374h1v1h-1zM380 374h1v1h-1zM382 374h1v1h-1zM384 374h1v1h-1zM386 374h1v1h-1zM388 374h1v1h-1zM390 374h1v1h-1zM392 374h1v1h-1zM394 374h1v1h-1z" fill="#c4c4c4"/>
<path d="M328.5 376.8 H333.8" stroke="#a8a8a8" stroke-width="0.9"/>
<text x="294" y="402.1" font-family="Liberation Sans" stroke-width="0.06" font-size="9.4" fill="#222" stroke="#222" textLength="38.9" lengthAdjust="spacingAndGlyphs">PositionY</text>
<path d="M333 401h1v1h-1zM335 401h1v1h-1zM337 401h1v1h-1zM339 401h1v1h-1zM341 401h1v1h-1zM343 401h1v1h-1zM345 401h1v1h-1zM347 401h1v1h-1zM349 401h1v1h-1zM351 401h1v1h-1zM353 401h1v1h-1zM355 401h1v1h-1zM357 401h1v1h-1zM359 401h1v1h-1zM361 401h1v1h-1zM363 401h1v1h-1zM365 401h1v1h-1zM367 401h1v1h-1zM369 401h1v1h-1zM371 401h1v1h-1zM373 401h1v1h-1zM375 401h1v1h-1zM377 401h1v1h-1zM379 401h1v1h-1zM381 401h1v1h-1zM383 401h1v1h-1zM385 401h1v1h-1zM387 401h1v1h-1zM389 401h1v1h-1zM391 401h1v1h-1zM393 401h1v1h-1zM395 401h1v1h-1z" fill="#666"/>
<path d="M327.5 403.6 H332.9" stroke="#222" stroke-width="0.9"/>
<text x="294" y="428.3" font-family="Liberation Sans" stroke-width="0.06" font-size="9.4" fill="#222" stroke="#222" textLength="25.5" lengthAdjust="spacingAndGlyphs">Width</text>
<path d="M320 427h1v1h-1zM322 427h1v1h-1zM324 427h1v1h-1zM326 427h1v1h-1zM328 427h1v1h-1zM330 427h1v1h-1zM332 427h1v1h-1zM334 427h1v1h-1zM336 427h1v1h-1zM338 427h1v1h-1zM340 427h1v1h-1zM342 427h1v1h-1zM344 427h1v1h-1zM346 427h1v1h-1zM348 427h1v1h-1zM350 427h1v1h-1zM352 427h1v1h-1zM354 427h1v1h-1zM356 427h1v1h-1zM358 427h1v1h-1zM360 427h1v1h-1zM362 427h1v1h-1zM364 427h1v1h-1zM366 427h1v1h-1zM368 427h1v1h-1zM370 427h1v1h-1zM372 427h1v1h-1zM374 427h1v1h-1zM376 427h1v1h-1zM378 427h1v1h-1zM380 427h1v1h-1zM382 427h1v1h-1zM384 427h1v1h-1zM386 427h1v1h-1zM388 427h1v1h-1zM390 427h1v1h-1zM392 427h1v1h-1zM394 427h1v1h-1z" fill="#666"/>
<path d="M294 429.8 H303" stroke="#222" stroke-width="0.9"/>
<rect x="401.7" y="205.4" width="237.6" height="15.7" fill="#fff" stroke="#e6e6e6" stroke-width="0.8"/>
<path d="M401.7 220.6 H639.3" stroke="#2c6b94" stroke-width="1.3"/>
<text x="403.7" y="217" font-family="Liberation Sans" stroke-width="0.06" font-size="9.8" fill="#222" stroke="#222" textLength="47.5" lengthAdjust="spacingAndGlyphs">Name field</text>
<path d="M451.8 208 v12" stroke="#111" stroke-width="0.8"/>
<rect x="401.7" y="232" width="203.5" height="15.5" fill="#fff" stroke="#e6e6e6" stroke-width="0.8"/>
<path d="M401.7 247.3 H605.2" stroke="#c8c8c8" stroke-width="1"/>
<text x="403.7" y="243.5" font-family="Liberation Sans" stroke-width="0.06" font-size="9.4" fill="#222" stroke="#222" textLength="28.3" lengthAdjust="spacingAndGlyphs">Name:</text>
<rect x="610.3" y="232" width="28" height="15.5" fill="#fff" stroke="#e0e0e0" stroke-width="0.8"/>
<path d="M626 237.5 h6 l-3 3.5z" fill="#111"/>
<rect x="402" y="258.3" width="236.3" height="16.0" fill="#fff" stroke="#c9c9c9" stroke-width="0.9"/>
<path d="M402 258.3 V274.3 H638.3" stroke="#9a9a9a" stroke-width="0.9" fill="none"/>
<path d="M625.5 258.8 V273.8" stroke="#dedede" stroke-width="0.8"/>
<path d="M629.5 264.8 l2.5 2.5 l2.5 -2.5" stroke="#999" stroke-width="0.9" fill="none"/>
<text x="403.3" y="269.7" font-family="Liberation Sans" stroke-width="0.06" font-size="9.4" fill="#222" stroke="#222" textLength="13.4" lengthAdjust="spacingAndGlyphs">Yes</text>
<rect x="402" y="284.3" width="236.3" height="16.5" fill="#fff" stroke="#c9c9c9" stroke-width="0.9"/>
<path d="M402 284.3 V300.8 H638.3" stroke="#9a9a9a" stroke-width="0.9" fill="none"/>
<path d="M625.5 284.8 V300.3" stroke="#dedede" stroke-width="0.8"/>
<path d="M629.5 291.1 l2.5 2.5 l2.5 -2.5" stroke="#999" stroke-width="0.9" fill="none"/>
<text x="403.3" y="296.2" font-family="Liberation Sans" stroke-width="0.06" font-size="9.4" fill="#222" stroke="#222" textLength="13.4" lengthAdjust="spacingAndGlyphs">Yes</text>
<rect x="402" y="310.7" width="236.3" height="16.3" fill="#fff" stroke="#c9c9c9" stroke-width="0.9"/>
<path d="M402 310.7 V327 H638.3" stroke="#9a9a9a" stroke-width="0.9" fill="none"/>
<path d="M625.5 311.2 V326.5" stroke="#dedede" stroke-width="0.8"/>
<path d="M629.5 317.4 l2.5 2.5 l2.5 -2.5" stroke="#999" stroke-width="0.9" fill="none"/>
<text x="403.3" y="322.4" font-family="Liberation Sans" stroke-width="0.06" font-size="9.4" fill="#222" stroke="#222" textLength="13.4" lengthAdjust="spacingAndGlyphs">Yes</text>
<rect x="402" y="337" width="236.3" height="16.4" fill="#fff" stroke="#c9c9c9" stroke-width="0.9"/>
<path d="M402 337 V353.4 H638.3" stroke="#9a9a9a" stroke-width="0.9" fill="none"/>
<path d="M625.5 337.5 V352.9" stroke="#dedede" stroke-width="0.8"/>
<path d="M629.5 343.7 l2.5 2.5 l2.5 -2.5" stroke="#999" stroke-width="0.9" fill="none"/>
<text x="403.3" y="348.8" font-family="Liberation Sans" stroke-width="0.06" font-size="9.4" fill="#222" stroke="#222" textLength="53.7" lengthAdjust="spacingAndGlyphs">As Character</text>
<rect x="402" y="363" width="236.3" height="16.0" fill="#fdfdfd"/>
<path d="M402 378.7 H638.3" stroke="#e2e2e2" stroke-width="0.9"/>
<text x="403.9" y="374.4" font-family="Liberation Sans" stroke-width="0.06" font-size="9.4" fill="#a8a8a8" stroke="#a8a8a8" textLength="20" lengthAdjust="spacingAndGlyphs">0.00″</text>
<rect x="626" y="364.0" width="12" height="6.7" fill="#f0f0f0" stroke="#b8b8b8" stroke-width="0.6"/>
<rect x="626" y="371.3" width="12" height="6.7" fill="#f0f0f0" stroke="#b8b8b8" stroke-width="0.6"/>
<path d="M629.5 369.0 h5 l-2.5 -3z M629.5 373.0 h5 l-2.5 3z" fill="#9a9a9a"/>
<rect x="402" y="390" width="236.3" height="15.8" fill="#fff"/>
<path d="M402 405.5 H638.3" stroke="#a9a9a9" stroke-width="0.9"/>
<text x="403.9" y="401.2" font-family="Liberation Sans" stroke-width="0.06" font-size="9.4" fill="#222" stroke="#222" textLength="20" lengthAdjust="spacingAndGlyphs">0.68″</text>
<rect x="626" y="391.0" width="12" height="6.6" fill="#e4e4e4" stroke="#b8b8b8" stroke-width="0.6"/>
<rect x="626" y="398.2" width="12" height="6.6" fill="#e4e4e4" stroke="#b8b8b8" stroke-width="0.6"/>
<path d="M629.5 395.9 h5 l-2.5 -3z M629.5 399.9 h5 l-2.5 3z" fill="#111"/>
<rect x="402" y="416.8" width="236.3" height="15.7" fill="#fff"/>
<path d="M402 432.2 H638.3" stroke="#a9a9a9" stroke-width="0.9"/>
<text x="403.9" y="427.9" font-family="Liberation Sans" stroke-width="0.06" font-size="9.4" fill="#222" stroke="#222" textLength="20" lengthAdjust="spacingAndGlyphs">0.63″</text>
<rect x="626" y="417.8" width="12" height="6.5" fill="#e4e4e4" stroke="#b8b8b8" stroke-width="0.6"/>
<rect x="626" y="424.9" width="12" height="6.6" fill="#e4e4e4" stroke="#b8b8b8" stroke-width="0.6"/>
<path d="M629.5 422.6 h5 l-2.5 -3z M629.5 426.6 h5 l-2.5 3z" fill="#111"/>
</svg>
</body></html>
